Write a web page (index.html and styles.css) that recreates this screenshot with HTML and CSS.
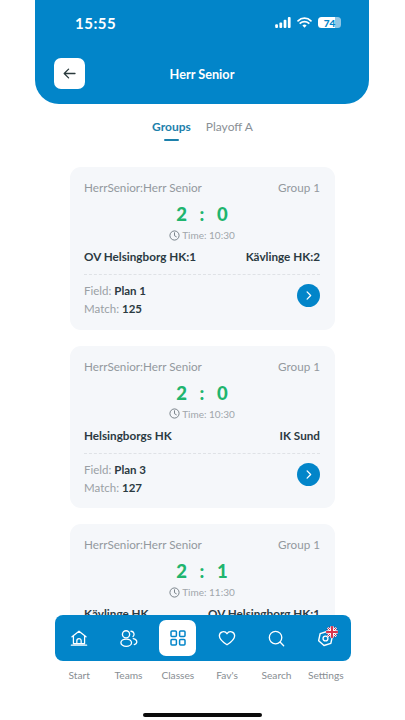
FILE: index.html
```html
<!DOCTYPE html>
<html lang="en">
<head>
<meta charset="utf-8">
<title>Herr Senior</title>
<link rel="stylesheet" href="styles.css">
</head>
<body>
<div class="phone">
  <header class="header">
    <div class="status">
      <span class="clock">15:55</span>
      <div class="status-icons">
        <svg class="signal" viewBox="0 0 17 12" width="16" height="11"><rect x="0" y="8" width="3" height="4" rx="1"/><rect x="4.6" y="6" width="3" height="6" rx="1"/><rect x="9.2" y="3" width="3" height="9" rx="1"/><rect x="13.8" y="0" width="3" height="12" rx="1"/></svg>
        <svg class="wifi" viewBox="0 0 16 12" width="15" height="11"><path d="M1 4.2a10 10 0 0 1 14 0M3.4 6.8a6.6 6.6 0 0 1 9.2 0" fill="none" stroke="#fff" stroke-width="1.9" stroke-linecap="round"/><path d="M8 11.6 5.7 9.2a3.3 3.3 0 0 1 4.6 0z" fill="#fff"/></svg>
        <span class="battery"><span class="battery-num">74</span></span>
      </div>
    </div>
    <div class="titlebar">
      <button class="back" aria-label="Back">
        <svg viewBox="0 0 14 12" width="13" height="11"><path d="M13 6H1.5M6 1.2 1.2 6 6 10.8" fill="none" stroke="#2a3a3c" stroke-width="1.4" stroke-linecap="round" stroke-linejoin="round"/></svg>
      </button>
      <h1 class="title">Herr Senior</h1>
    </div>
  </header>

  <nav class="tabs">
    <span class="tab tab-active">Groups</span>
    <span class="tab">Playoff A</span>
  </nav>

  <main class="list">
    <article class="card">
      <div class="card-top"><span>HerrSenior:Herr Senior</span><span>Group 1</span></div>
      <div class="score"><span>2</span><span>:</span><span>0</span></div>
      <div class="time"><svg viewBox="0 0 12 12" width="11" height="11"><circle cx="6" cy="6" r="5" fill="none" stroke="#6f7880" stroke-width="1"/><path d="M6 3v3.2l2 1.2" fill="none" stroke="#6f7880" stroke-width="1" stroke-linecap="round"/></svg>Time: 10:30</div>
      <div class="teams"><span>OV Helsingborg HK:1</span><span>Kävlinge HK:2</span></div>
      <div class="card-bottom">
        <div class="meta"><div>Field: <b>Plan 1</b></div><div>Match: <b>125</b></div></div>
        <span class="go"><svg viewBox="0 0 8 12" width="6" height="9"><path d="M1.5 1.2 6.2 6l-4.7 4.8" fill="none" stroke="#fff" stroke-width="1.7" stroke-linecap="round" stroke-linejoin="round"/></svg></span>
      </div>
    </article>
    <article class="card">
      <div class="card-top"><span>HerrSenior:Herr Senior</span><span>Group 1</span></div>
      <div class="score"><span>2</span><span>:</span><span>0</span></div>
      <div class="time"><svg viewBox="0 0 12 12" width="11" height="11"><circle cx="6" cy="6" r="5" fill="none" stroke="#6f7880" stroke-width="1"/><path d="M6 3v3.2l2 1.2" fill="none" stroke="#6f7880" stroke-width="1" stroke-linecap="round"/></svg>Time: 10:30</div>
      <div class="teams"><span>Helsingborgs HK</span><span>IK Sund</span></div>
      <div class="card-bottom">
        <div class="meta"><div>Field: <b>Plan 3</b></div><div>Match: <b>127</b></div></div>
        <span class="go"><svg viewBox="0 0 8 12" width="6" height="9"><path d="M1.5 1.2 6.2 6l-4.7 4.8" fill="none" stroke="#fff" stroke-width="1.7" stroke-linecap="round" stroke-linejoin="round"/></svg></span>
      </div>
    </article>
    <article class="card">
      <div class="card-top"><span>HerrSenior:Herr Senior</span><span>Group 1</span></div>
      <div class="score"><span>2</span><span>:</span><span>1</span></div>
      <div class="time"><svg viewBox="0 0 12 12" width="11" height="11"><circle cx="6" cy="6" r="5" fill="none" stroke="#6f7880" stroke-width="1"/><path d="M6 3v3.2l2 1.2" fill="none" stroke="#6f7880" stroke-width="1" stroke-linecap="round"/></svg>Time: 11:30</div>
      <div class="teams"><span>Kävlinge HK</span><span>OV Helsingborg HK:1</span></div>
    </article>
  </main>

  <footer class="footer">
    <div class="navbar">
      <span class="nav-item">
        <svg viewBox="0 0 20 20" width="18" height="18"><path d="M2.2 8.6 10 2.4l7.8 6.2M3.8 7.6v8.6h12.4V7.6M1.5 18h17M7.6 16v-3a2.4 2.4 0 0 1 4.8 0v3" fill="none" stroke="#fff" stroke-width="1.4" stroke-linecap="round" stroke-linejoin="round"/></svg>
      </span>
      <span class="nav-item">
        <svg viewBox="0 0 20 20" width="19" height="19"><circle cx="7.4" cy="5.6" r="3.8" fill="none" stroke="#fff" stroke-width="1.4"/><ellipse cx="7.6" cy="14.4" rx="5.6" ry="3.8" fill="none" stroke="#fff" stroke-width="1.4"/><path d="M12.6 2.4a3.2 3.2 0 0 1 2.2 5.6M15 10.2c2.6.4 4 2 3.7 3.8-.2 1.2-1.2 2-2.6 2.4" fill="none" stroke="#fff" stroke-width="1.4" stroke-linecap="round"/></svg>
      </span>
      <span class="nav-item nav-active">
        <svg viewBox="0 0 16 16" width="16" height="16"><g fill="none" stroke="#0285c9" stroke-width="1.5"><rect x="1" y="1" width="5.4" height="5.4" rx="1"/><rect x="9.6" y="1" width="5.4" height="5.4" rx="1"/><rect x="1" y="9.6" width="5.4" height="5.4" rx="1"/><rect x="9.6" y="9.6" width="5.4" height="5.4" rx="1"/></g></svg>
      </span>
      <span class="nav-item">
        <svg viewBox="0 0 20 18" width="18" height="16"><path d="M10 16.6C5 13.4 1.4 10.4 1.4 6.4A4.6 4.6 0 0 1 10 4.2a4.6 4.6 0 0 1 8.6 2.2c0 4-3.6 7-8.6 10.2z" fill="none" stroke="#fff" stroke-width="1.5" stroke-linejoin="round"/></svg>
      </span>
      <span class="nav-item">
        <svg viewBox="0 0 18 18" width="17" height="17"><circle cx="8" cy="8" r="6.6" fill="none" stroke="#fff" stroke-width="1.4"/><path d="m13 13 3.6 3.6" stroke="#fff" stroke-width="1.4" stroke-linecap="round"/></svg>
      </span>
      <span class="nav-item">
        <span class="gear">
          <svg viewBox="0 0 18 18" width="17" height="17"><path d="M9 1.4 15.6 5.2v7.6L9 16.6 2.4 12.8V5.2z" fill="none" stroke="#fff" stroke-width="1.5" stroke-linejoin="round" transform="rotate(12 9 9)"/><circle cx="9" cy="9" r="2.6" fill="none" stroke="#fff" stroke-width="1.4"/></svg>
          <svg class="flag" viewBox="0 0 12 12" width="12" height="12"><defs><clipPath id="fc"><circle cx="6" cy="6" r="6"/></clipPath></defs><g clip-path="url(#fc)"><rect width="12" height="12" fill="#28367f"/><path d="M0 0 12 12M12 0 0 12" stroke="#fff" stroke-width="2.4"/><path d="M0 0 12 12M12 0 0 12" stroke="#d8344e" stroke-width="1"/><path d="M6 0v12M0 6h12" stroke="#fff" stroke-width="3.6"/><path d="M6 0v12M0 6h12" stroke="#d8344e" stroke-width="2"/></g></svg>
        </span>
      </span>
    </div>
    <div class="labels">
      <span>Start</span><span>Teams</span><span>Classes</span><span>Fav's</span><span>Search</span><span>Settings</span>
    </div>
    <div class="home-bar"></div>
  </footer>
</div>
</body>
</html>
```
FILE: styles.css
```css
* { box-sizing: border-box; }
html, body { margin: 0; padding: 0; background: #fff; }
body { font-family: "Lato", "Open Sans", sans-serif; color: #2b3a42; }

.phone {
  width: 405px;
  height: 720px;
  display: flex;
  flex-direction: column;
  overflow: hidden;
  background: #fff;
}

.header {
  flex: none;
  height: 104px;
  margin: 0 36px 0 35px;
  background: #0285c9;
  border-radius: 0 0 24px 24px;
  color: #fff;
  padding: 14px 28px 0 19px;
}
.status {
  display: flex;
  justify-content: space-between;
  align-items: center;
  height: 17px;
  padding-left: 21px;
}
.clock { font-size: 15px; font-weight: 700; letter-spacing: .5px; }
.status-icons { display: flex; align-items: center; gap: 6px; }
.signal { fill: #fff; }
.battery {
  width: 23px;
  height: 11px;
  border-radius: 3.5px;
  background: linear-gradient(90deg, #fff 74%, #8fc6e6 74%);
  display: flex;
  align-items: center;
  justify-content: center;
}
.battery-num { font-size: 10px; font-weight: 900; color: #0285c9; line-height: 1; }

.titlebar {
  display: flex;
  align-items: center;
  margin-top: 27px;
  height: 31px;
}
.back {
  flex: none;
  width: 31px;
  height: 31px;
  padding: 0;
  border: 0;
  border-radius: 7px;
  background: #fff;
  display: flex;
  align-items: center;
  justify-content: center;
}
.title {
  flex: 1;
  margin: 0;
  padding-right: 22px;
  text-align: center;
  font-size: 12.7px;
  font-weight: 700;
  color: #fff;
}

.tabs {
  flex: none;
  height: 63px;
  display: flex;
  justify-content: center;
  gap: 15px;
  padding-top: 15px;
  font-size: 12px;
}
.tab { color: #8a9096; line-height: 15px; position: relative; height: 22px; }
.tab-active { color: #1c80ab; font-weight: 700; }
.tab-active::after {
  content: "";
  position: absolute;
  left: 12px;
  right: 12px;
  bottom: 0;
  height: 2px;
  background: #1c80ab;
  border-radius: 1px;
}

.list {
  flex: 1;
  min-height: 0;
  overflow: hidden;
  padding: 0 70px;
  display: flex;
  flex-direction: column;
  gap: 16px;
}
.card {
  flex: none;
  height: 162.5px;
  background: #f5f7fa;
  border-radius: 11px;
  padding: 13px 15px 0 14px;
}
.card-top {
  display: flex;
  justify-content: space-between;
  font-size: 11.7px;
  line-height: 15px;
  color: #93999e;
}
.score {
  display: flex;
  justify-content: center;
  gap: 12.5px;
  margin-top: 8px;
  font-size: 18.5px;
  font-weight: 900;
  line-height: 23px;
  color: #1fb56e;
}
.time {
  display: flex;
  justify-content: center;
  align-items: center;
  gap: 2px;
  margin-top: 2px;
  font-size: 10px;
  line-height: 14px;
  color: #a0a6ab;
}
.teams {
  display: flex;
  justify-content: space-between;
  margin-top: 7px;
  font-size: 11.7px;
  line-height: 15px;
  font-weight: 700;
  color: #2b3a42;
}
.card-bottom {
  display: flex;
  justify-content: space-between;
  align-items: flex-start;
  margin-top: 10px;
  padding-top: 7px;
  border-top: 1px dashed #dfe2e6;
}
.meta { font-size: 11.5px; line-height: 18px; color: #9aa0a5; }
.meta b { color: #2b3a42; font-weight: 700; }
.go {
  width: 23px;
  height: 23px;
  margin-top: 2px;
  border-radius: 50%;
  background: #0285c9;
  display: flex;
  align-items: center;
  justify-content: center;
}

.footer {
  flex: none;
  height: 105px;
  background: #fff;
  display: flex;
  flex-direction: column;
  align-items: center;
}
.navbar {
  width: 296px;
  height: 46px;
  background: #0285c9;
  border-radius: 8px;
  display: grid;
  grid-template-columns: repeat(6, 49.33px);
  align-items: center;
  justify-items: center;
}
.nav-item { display: flex; align-items: center; justify-content: center; }
.nav-active {
  width: 37px;
  height: 36px;
  background: #fff;
  border-radius: 7px;
}
.gear { position: relative; display: flex; }
.flag { position: absolute; top: -4px; right: -4px; }

.labels {
  width: 296px;
  display: grid;
  grid-template-columns: repeat(6, 49.33px);
  justify-items: center;
  margin-top: 8px;
  font-size: 10.2px;
  line-height: 13px;
  color: #888e93;
}
.home-bar {
  width: 119px;
  height: 4px;
  margin-top: 31px;
  margin-left: -1px;
  border-radius: 2px;
  background: #0b0b0b;
}
```
